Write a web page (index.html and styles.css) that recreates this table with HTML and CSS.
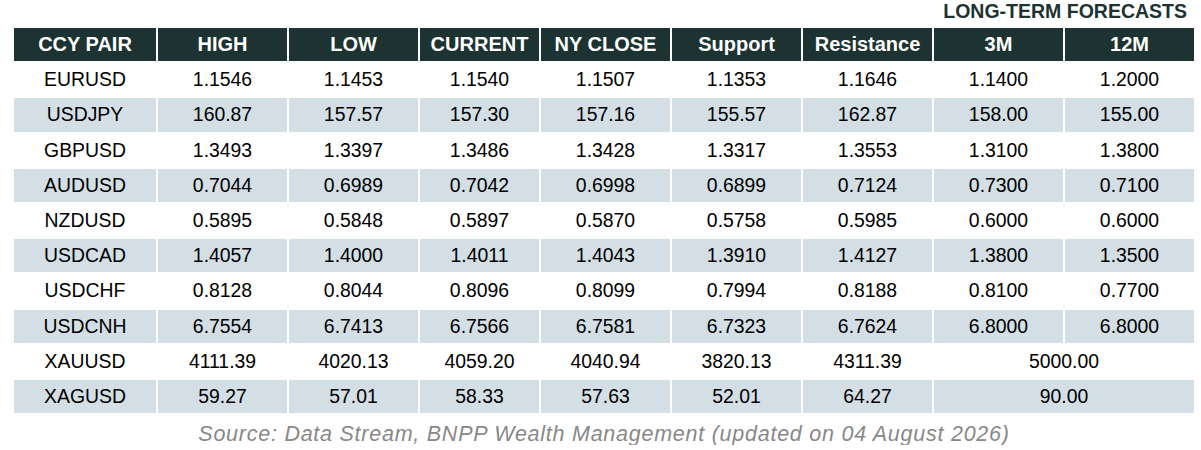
FILE: index.html
```html
<!DOCTYPE html>
<html lang="en">
<head>
<meta charset="utf-8">
<title>Long-term forecasts</title>
<link rel="stylesheet" href="styles.css">
</head>
<body>
<div class="page">
  <div class="title">LONG-TERM FORECASTS</div>
  <div class="grid">
    <div class="hd">CCY PAIR</div><div class="hd">HIGH</div><div class="hd">LOW</div><div class="hd">CURRENT</div><div class="hd">NY CLOSE</div><div class="hd">Support</div><div class="hd">Resistance</div><div class="hd">3M</div><div class="hd">12M</div>

    <div class="c">EURUSD</div><div class="c">1.1546</div><div class="c">1.1453</div><div class="c">1.1540</div><div class="c">1.1507</div><div class="c">1.1353</div><div class="c">1.1646</div><div class="c">1.1400</div><div class="c">1.2000</div>

    <div class="c s">USDJPY</div><div class="c s">160.87</div><div class="c s">157.57</div><div class="c s">157.30</div><div class="c s">157.16</div><div class="c s">155.57</div><div class="c s">162.87</div><div class="c s">158.00</div><div class="c s">155.00</div>

    <div class="c">GBPUSD</div><div class="c">1.3493</div><div class="c">1.3397</div><div class="c">1.3486</div><div class="c">1.3428</div><div class="c">1.3317</div><div class="c">1.3553</div><div class="c">1.3100</div><div class="c">1.3800</div>

    <div class="c s">AUDUSD</div><div class="c s">0.7044</div><div class="c s">0.6989</div><div class="c s">0.7042</div><div class="c s">0.6998</div><div class="c s">0.6899</div><div class="c s">0.7124</div><div class="c s">0.7300</div><div class="c s">0.7100</div>

    <div class="c">NZDUSD</div><div class="c">0.5895</div><div class="c">0.5848</div><div class="c">0.5897</div><div class="c">0.5870</div><div class="c">0.5758</div><div class="c">0.5985</div><div class="c">0.6000</div><div class="c">0.6000</div>

    <div class="c s">USDCAD</div><div class="c s">1.4057</div><div class="c s">1.4000</div><div class="c s">1.4011</div><div class="c s">1.4043</div><div class="c s">1.3910</div><div class="c s">1.4127</div><div class="c s">1.3800</div><div class="c s">1.3500</div>

    <div class="c">USDCHF</div><div class="c">0.8128</div><div class="c">0.8044</div><div class="c">0.8096</div><div class="c">0.8099</div><div class="c">0.7994</div><div class="c">0.8188</div><div class="c">0.8100</div><div class="c">0.7700</div>

    <div class="c s">USDCNH</div><div class="c s">6.7554</div><div class="c s">6.7413</div><div class="c s">6.7566</div><div class="c s">6.7581</div><div class="c s">6.7323</div><div class="c s">6.7624</div><div class="c s">6.8000</div><div class="c s">6.8000</div>

    <div class="c">XAUUSD</div><div class="c">4111.39</div><div class="c">4020.13</div><div class="c">4059.20</div><div class="c">4040.94</div><div class="c">3820.13</div><div class="c">4311.39</div><div class="c span2">5000.00</div>

    <div class="c s">XAGUSD</div><div class="c s">59.27</div><div class="c s">57.01</div><div class="c s">58.33</div><div class="c s">57.63</div><div class="c s">52.01</div><div class="c s">64.27</div><div class="c s span2">90.00</div>
  </div>
  <div class="source">Source: Data Stream, BNPP Wealth Management (updated on 04 August 2026)</div>
</div>
</body>
</html>
```

FILE: styles.css
```css
html, body {
  margin: 0;
  padding: 0;
  background: #ffffff;
}

.page {
  width: 1180px;
  margin-left: 14px;
  font-family: "Liberation Sans", Arial, sans-serif;
}

.title {
  font-size: 19.5px;
  line-height: 22px;
  font-weight: bold;
  color: #1c3331;
  text-align: right;
  padding-right: 7px;
  margin-bottom: 6px;
}

.grid {
  display: grid;
  grid-template-columns: 142px 129px 129px 119px 129px 129px 129px 129px 129px;
  grid-auto-rows: 33.2px;
  gap: 2px;
}

.hd {
  background: #1c3331;
  color: #ffffff;
  font-weight: bold;
  font-size: 20px;
  display: flex;
  align-items: center;
  justify-content: center;
}

.c {
  font-size: 19.4px;
  color: #000000;
  display: flex;
  align-items: center;
  justify-content: center;
}

.s {
  background: #d3dfe5;
}

.span2 {
  grid-column: span 2;
}

.source {
  margin-top: 10px;
  font-size: 21.5px;
  line-height: 22px;
  letter-spacing: 0.75px;
  font-style: italic;
  color: #888888;
  text-align: center;
}
```
